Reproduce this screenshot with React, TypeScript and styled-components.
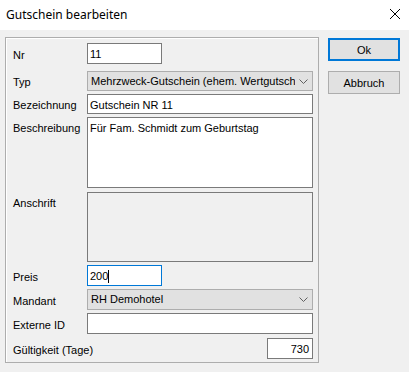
import React from "react";
import styled, { createGlobalStyle } from "styled-components";

const GlobalStyle = createGlobalStyle`
  html, body {
    margin: 0;
    padding: 0;
    background: #f0f0f0;
  }
  body {
    font-family: "Liberation Sans", Arial, sans-serif;
    font-size: 11px;
    color: #000;
  }
`;

const Window = styled.div`
  width: 409px;
  height: 372px;
  display: flex;
  flex-direction: column;
  background: #f0f0f0;
  overflow: hidden;
`;

const TitleBar = styled.div`
  height: 30px;
  flex-shrink: 0;
  background: #fff;
  display: flex;
  align-items: center;
  justify-content: space-between;
  padding: 0 9px 0 6px;
`;

const Title = styled.div`
  font-family: "Noto Sans", "Open Sans", sans-serif;
  font-size: 12px;
  color: #000;
  padding-bottom: 2px;
`;

const CloseButton = styled.div`
  width: 10px;
  height: 10px;
  display: flex;
  margin-bottom: 2px;
`;

const Body = styled.div`
  display: flex;
  align-items: flex-start;
  padding: 7px 0 0 5px;
`;

const GroupBox = styled.div`
  width: 314px;
  height: 326px;
  box-sizing: border-box;
  border: 1px solid #adadad;
  box-shadow: inset 1px 1px 0 #fff;
  padding: 5px 5px 0 7px;
  display: flex;
  flex-direction: column;
`;

const Row = styled.div<{ $gap: number; $h: number; $top?: boolean }>`
  display: flex;
  align-items: ${(p) => (p.$top ? "flex-start" : "center")};
  margin-top: ${(p) => p.$gap}px;
  height: ${(p) => p.$h}px;
`;

const Label = styled.div<{ $top?: boolean }>`
  width: 74px;
  flex-shrink: 0;
  padding-top: ${(p) => (p.$top ? 5 : 2)}px;
  white-space: nowrap;
`;

const Field = styled.div<{ $w?: number; $focus?: boolean; $disabled?: boolean; $right?: boolean }>`
  box-sizing: border-box;
  width: ${(p) => (p.$w ? `${p.$w}px` : "226px")};
  height: 100%;
  margin-left: ${(p) => (p.$right ? "auto" : "0")};
  border: 1px solid ${(p) => (p.$focus ? "#0078d7" : "#7a7a7a")};
  background: ${(p) => (p.$disabled ? "#f0f0f0" : "#fff")};
  padding: 4px 3px 0 2px;
  display: flex;
  align-items: flex-start;
  justify-content: ${(p) => (p.$right ? "flex-end" : "flex-start")};
  line-height: 13px;
  white-space: nowrap;
  overflow: hidden;
`;

const Combo = styled.div`
  box-sizing: border-box;
  width: 226px;
  height: 100%;
  border: 1px solid #adadad;
  background: #e1e1e1;
  padding: 3px 0 0 3px;
  display: flex;
  align-items: flex-start;
  line-height: 13px;
  white-space: nowrap;
  overflow: hidden;
`;

const ComboText = styled.div`
  flex: 1;
  overflow: hidden;
  white-space: nowrap;
`;

const ComboArrow = styled.div`
  width: 17px;
  flex-shrink: 0;
  display: flex;
  justify-content: center;
  padding-top: 4px;
  background: #e1e1e1;
`;

const Caret = styled.span`
  display: inline-block;
  width: 1px;
  height: 13px;
  background: #000;
`;

const ButtonColumn = styled.div`
  display: flex;
  flex-direction: column;
  gap: 10px;
  margin-left: 9px;
  margin-top: 1px;
`;

const Button = styled.div<{ $default?: boolean }>`
  box-sizing: border-box;
  width: 72px;
  height: 23px;
  border: ${(p) => (p.$default ? "2px solid #0078d7" : "1px solid #adadad")};
  background: #e1e1e1;
  display: flex;
  align-items: center;
  justify-content: center;
  font-size: 11px;
`;

const Chevron = () => (
  <svg width="9" height="5" viewBox="0 0 9 5">
    <path d="M0.5 0.5 L4.5 4.5 L8.5 0.5" fill="none" stroke="#606060" strokeWidth="1" />
  </svg>
);

const App: React.FC = () => {
  return (
    <>
      <GlobalStyle />
      <Window>
        <TitleBar>
          <Title>Gutschein bearbeiten</Title>
          <CloseButton>
            <svg width="10" height="10" viewBox="0 0 10 10">
              <path d="M0 0 L10 10 M10 0 L0 10" stroke="#000" strokeWidth="1" />
            </svg>
          </CloseButton>
        </TitleBar>
        <Body>
          <GroupBox>
            <Row $gap={0} $h={21}>
              <Label>Nr</Label>
              <Field $w={75}>11</Field>
            </Row>
            <Row $gap={7} $h={20}>
              <Label>Typ</Label>
              <Combo>
                <ComboText>Mehrzweck-Gutschein (ehem. Wertgutschein)</ComboText>
                <ComboArrow>
                  <Chevron />
                </ComboArrow>
              </Combo>
            </Row>
            <Row $gap={3} $h={20}>
              <Label>Bezeichnung</Label>
              <Field>Gutschein NR 11</Field>
            </Row>
            <Row $gap={3} $h={71} $top>
              <Label $top>Beschreibung</Label>
              <Field>Für Fam. Schmidt zum Geburtstag</Field>
            </Row>
            <Row $gap={4} $h={70} $top>
              <Label $top>Anschrift</Label>
              <Field $disabled />
            </Row>
            <Row $gap={3} $h={21}>
              <Label>Preis</Label>
              <Field $w={75} $focus>
                200
                <Caret />
              </Field>
            </Row>
            <Row $gap={3} $h={21}>
              <Label>Mandant</Label>
              <Combo>
                <ComboText>RH Demohotel</ComboText>
                <ComboArrow>
                  <Chevron />
                </ComboArrow>
              </Combo>
            </Row>
            <Row $gap={3} $h={21}>
              <Label>Externe ID</Label>
              <Field />
            </Row>
            <Row $gap={4} $h={21}>
              <Label>Gültigkeit (Tage)</Label>
              <Field $w={46} $right>
                730
              </Field>
            </Row>
          </GroupBox>
          <ButtonColumn>
            <Button $default>Ok</Button>
            <Button>Abbruch</Button>
          </ButtonColumn>
        </Body>
      </Window>
    </>
  );
};

export default App;
